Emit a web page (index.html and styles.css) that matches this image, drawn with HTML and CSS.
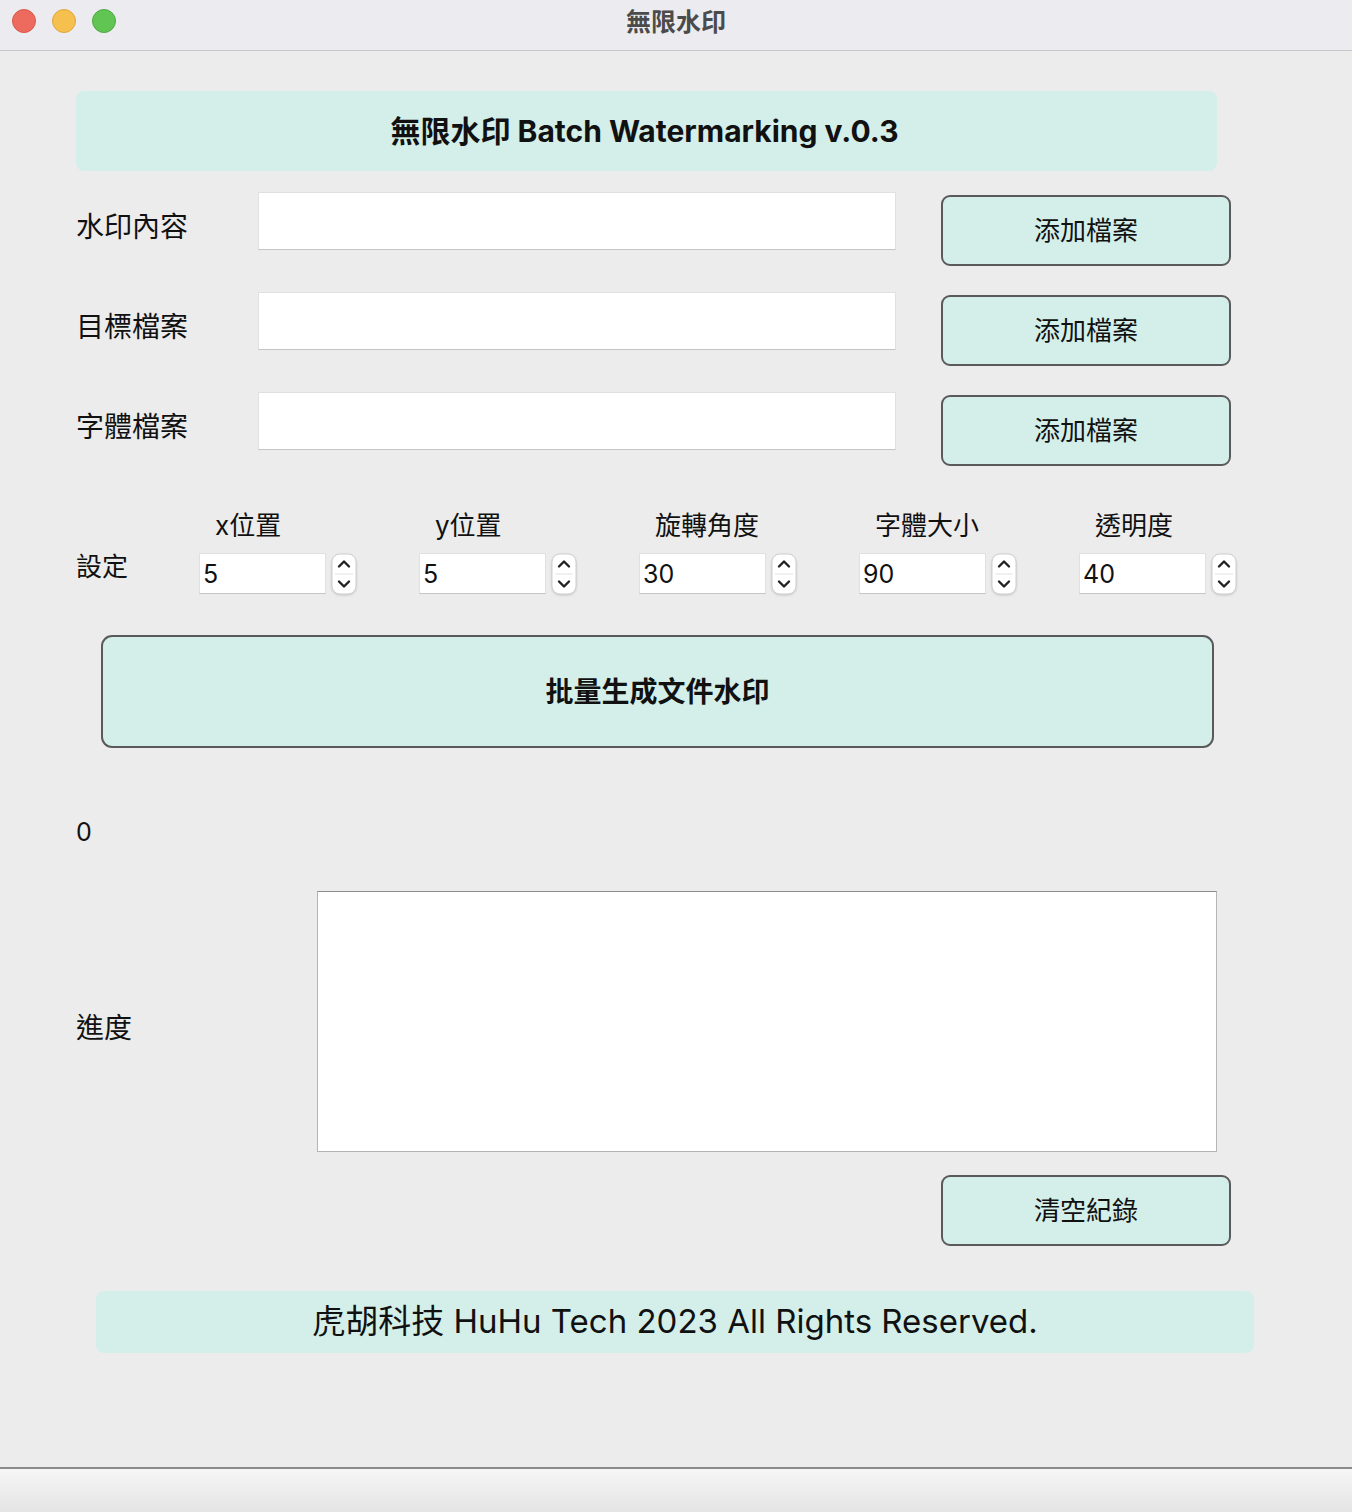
FILE: index.html
```html
<!DOCTYPE html>
<html lang="zh-Hant">
<head>
    <meta charset="UTF-8">
    <meta name="viewport" content="width=device-width, initial-scale=1.0">
    <title>無限水印</title>
    <link rel="stylesheet" href="styles.css">
</head>
<body>

    <div class="titlebar">
        <div class="lights">
            <span class="light red"></span>
            <span class="light yellow"></span>
            <span class="light green"></span>
        </div>
        <div class="window-title">無限水印</div>
        <div></div>
    </div>

    <div class="main">
        <div class="banner">無限水印 Batch Watermarking v.0.3</div>

        <div class="file-rows">
            <div class="file-row">
                <label class="row-label">水印內容</label>
                <input type="text" class="text-input">
                <button class="btn">添加檔案</button>
            </div>
            <div class="file-row">
                <label class="row-label">目標檔案</label>
                <input type="text" class="text-input">
                <button class="btn">添加檔案</button>
            </div>
            <div class="file-row">
                <label class="row-label">字體檔案</label>
                <input type="text" class="text-input">
                <button class="btn">添加檔案</button>
            </div>
        </div>

        <div class="settings">
            <div class="settings-label">設定</div>
            <div class="setting">
                <div class="setting-name">x位置</div>
                <div class="spin"><input class="spin-input" value="5"><svg class="spin-arrows" viewBox="0 0 26 42"><rect x="1" y="1" width="24" height="40" rx="8" fill="#fff" stroke="#cfcfcf"/><line x1="4" y1="21" x2="22" y2="21" stroke="#e2e2e2"/><path d="M8 13.5 L13 8.5 L18 13.5" fill="none" stroke="#222" stroke-width="2.4" stroke-linecap="round" stroke-linejoin="round"/><path d="M8 28.5 L13 33.5 L18 28.5" fill="none" stroke="#222" stroke-width="2.4" stroke-linecap="round" stroke-linejoin="round"/></svg></div>
            </div>
            <div class="setting">
                <div class="setting-name">y位置</div>
                <div class="spin"><input class="spin-input" value="5"><svg class="spin-arrows" viewBox="0 0 26 42"><rect x="1" y="1" width="24" height="40" rx="8" fill="#fff" stroke="#cfcfcf"/><line x1="4" y1="21" x2="22" y2="21" stroke="#e2e2e2"/><path d="M8 13.5 L13 8.5 L18 13.5" fill="none" stroke="#222" stroke-width="2.4" stroke-linecap="round" stroke-linejoin="round"/><path d="M8 28.5 L13 33.5 L18 28.5" fill="none" stroke="#222" stroke-width="2.4" stroke-linecap="round" stroke-linejoin="round"/></svg></div>
            </div>
            <div class="setting">
                <div class="setting-name">旋轉角度</div>
                <div class="spin"><input class="spin-input" value="30"><svg class="spin-arrows" viewBox="0 0 26 42"><rect x="1" y="1" width="24" height="40" rx="8" fill="#fff" stroke="#cfcfcf"/><line x1="4" y1="21" x2="22" y2="21" stroke="#e2e2e2"/><path d="M8 13.5 L13 8.5 L18 13.5" fill="none" stroke="#222" stroke-width="2.4" stroke-linecap="round" stroke-linejoin="round"/><path d="M8 28.5 L13 33.5 L18 28.5" fill="none" stroke="#222" stroke-width="2.4" stroke-linecap="round" stroke-linejoin="round"/></svg></div>
            </div>
            <div class="setting">
                <div class="setting-name">字體大小</div>
                <div class="spin"><input class="spin-input" value="90"><svg class="spin-arrows" viewBox="0 0 26 42"><rect x="1" y="1" width="24" height="40" rx="8" fill="#fff" stroke="#cfcfcf"/><line x1="4" y1="21" x2="22" y2="21" stroke="#e2e2e2"/><path d="M8 13.5 L13 8.5 L18 13.5" fill="none" stroke="#222" stroke-width="2.4" stroke-linecap="round" stroke-linejoin="round"/><path d="M8 28.5 L13 33.5 L18 28.5" fill="none" stroke="#222" stroke-width="2.4" stroke-linecap="round" stroke-linejoin="round"/></svg></div>
            </div>
            <div class="setting">
                <div class="setting-name">透明度</div>
                <div class="spin"><input class="spin-input" value="40"><svg class="spin-arrows" viewBox="0 0 26 42"><rect x="1" y="1" width="24" height="40" rx="8" fill="#fff" stroke="#cfcfcf"/><line x1="4" y1="21" x2="22" y2="21" stroke="#e2e2e2"/><path d="M8 13.5 L13 8.5 L18 13.5" fill="none" stroke="#222" stroke-width="2.4" stroke-linecap="round" stroke-linejoin="round"/><path d="M8 28.5 L13 33.5 L18 28.5" fill="none" stroke="#222" stroke-width="2.4" stroke-linecap="round" stroke-linejoin="round"/></svg></div>
            </div>
        </div>

        <button class="btn btn-run">批量生成文件水印</button>

        <div class="counter">0</div>

        <div class="progress-row">
            <div class="row-label">進度</div>
            <textarea class="log"></textarea>
        </div>

        <div class="log-actions">
            <button class="btn">清空紀錄</button>
        </div>

        <div class="footer-banner">虎胡科技 HuHu Tech 2023 All Rights Reserved.</div>
    </div>

    <div class="statusbar"></div>

</body>
</html>
```

FILE: styles.css
```css
body {
    margin: 0;
    height: 100vh;
    display: flex;
    flex-direction: column;
    font-family: "Inter", "Noto Sans CJK TC", sans-serif;
    color: #111;
    background-color: #ececec;
}
.titlebar {
    height: 50px;
    display: grid;
    grid-template-columns: 1fr auto 1fr;
    align-items: center;
    background-color: #ececf0;
    border-bottom: 1px solid #c9c9cc;
}
.lights {
    display: flex;
    gap: 16px;
    padding-left: 12px;
    margin-top: -8px;
}
.light {
    width: 24px;
    height: 24px;
    border-radius: 50%;
    box-sizing: border-box;
}
.light.red {
    background-color: #ed6a5e;
    border: 1px solid #d6584d;
}
.light.yellow {
    background-color: #f6c04f;
    border: 1px solid #dea63c;
}
.light.green {
    background-color: #61c554;
    border: 1px solid #4ea943;
}
.window-title {
    font-family: "Noto Sans CJK TC", sans-serif;
    font-weight: bold;
    font-size: 25px;
    color: #4b4b4b;
    margin-top: -10px;
}
.main {
    flex: 1;
    padding: 40px 0 0 76px;
}
.banner {
    width: 1141px;
    height: 80px;
    box-sizing: border-box;
    background-color: #d4efea;
    border-radius: 8px;
    display: flex;
    align-items: center;
    justify-content: center;
    padding: 0 4px 4px 0;
    font-size: 30px;
    font-weight: bold;
}
.file-rows {
    margin-top: 21px;
}
.file-row {
    height: 100px;
    display: grid;
    grid-template-columns: 182px 638px 290px;
    align-items: start;
}
.row-label {
    font-size: 28px;
    line-height: 58px;
    padding-top: 6px;
}
.text-input {
    height: 58px;
    box-sizing: border-box;
    margin: 0;
    border: 1px solid #e0e0e0;
    border-bottom-color: #c4c4c4;
    background-color: #fff;
    font-size: 24px;
}
.btn {
    font-family: "Inter", "Noto Sans CJK TC", sans-serif;
    background-color: #d4efea;
    border: 2px solid #5a5a5a;
    border-radius: 9px;
    color: #111;
    cursor: pointer;
    padding: 0 0 4px 0;
}
.file-row .btn,
.log-actions .btn {
    width: 290px;
    height: 71px;
    margin-top: 3px;
    font-size: 26px;
}
.file-row .btn {
    margin-left: 45px;
}
.settings {
    margin-top: 16px;
    display: flex;
    align-items: flex-end;
}
.settings-label {
    width: 123px;
    font-size: 26px;
    line-height: 36px;
    margin-bottom: 10px;
}
.setting {
    width: 220px;
}
.setting-name {
    padding-left: 16px;
    font-size: 26px;
    line-height: 36px;
    margin-bottom: 9px;
}
.spin {
    display: flex;
    gap: 5px;
}
.spin-input {
    width: 127px;
    height: 41px;
    box-sizing: border-box;
    margin: 0;
    padding: 0 0 0 3px;
    border: 1px solid #e0e0e0;
    border-bottom-color: #c4c4c4;
    background-color: #fff;
    font-family: "Inter", sans-serif;
    font-size: 25px;
    color: #111;
}
.spin-arrows {
    width: 26px;
    height: 42px;
    filter: drop-shadow(0 1px 1px rgba(0, 0, 0, 0.15));
}
.btn-run {
    display: block;
    margin: 40px 0 0 25px;
    width: 1113px;
    height: 113px;
    border-radius: 11px;
    font-size: 28px;
    font-weight: bold;
    padding-bottom: 3px;
}
.counter {
    margin-top: 69px;
    font-size: 25px;
    line-height: 30px;
}
.progress-row {
    margin-top: 44px;
    display: flex;
    align-items: center;
}
.progress-row .row-label {
    width: 241px;
    padding-top: 12px;
}
.log {
    width: 900px;
    height: 261px;
    box-sizing: border-box;
    margin: 0;
    border: 1px solid #b4b4b4;
    border-top-color: #8e8e8e;
    background-color: #fff;
    resize: none;
}
.log-actions {
    display: flex;
    padding-left: 865px;
    margin-top: 20px;
}
.footer-banner {
    margin: 45px 0 0 20px;
    width: 1158px;
    height: 62px;
    box-sizing: border-box;
    border-radius: 8px;
    background-color: #d4efea;
    display: flex;
    align-items: center;
    justify-content: center;
    padding-bottom: 6px;
    font-size: 33px;
}
.statusbar {
    height: 43px;
    border-top: 2px solid #8a8a8a;
    background: linear-gradient(#f6f6f6, #e4e4e4);
}
```
